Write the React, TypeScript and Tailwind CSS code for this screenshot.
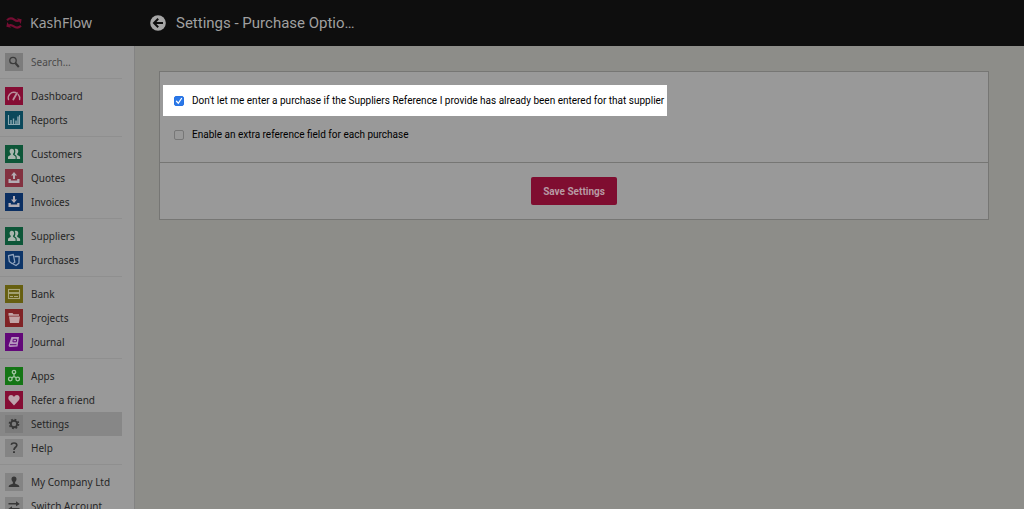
import type { ReactNode } from "react";

type Item = { label: string; tile: string; icon: ReactNode; active?: boolean };

const people = (
  <g fill="#a9b5ae">
    <path d="M6.800 3.800c1.600 0 2.300 1.100 2.300 2.500 0 1.100-.5 1.900-1 2.500v.9c.4.8 2.500 1 2.500 2.500V14H3v-1.800c0-1.500 2.300-1.700 2.700-2.500v-.9c-.5-.6-1.100-1.400-1.100-2.500 0-1.400.8-2.500 2.200-2.500z" />
    <path d="M11 3.800c1.600 0 2.300 1.100 2.300 2.500 0 1.100-.6 1.900-1.100 2.500v.9c.4.8 2.900 1 2.900 2.500V14h-3.400v-2c0-1.300-1-2-2.100-2.600.5-1 .7-1.700.7-3 0-.9-.2-1.600-.6-2.300.3-.2.8-.3 1.300-.3z" />
  </g>
);

const tray = <path d="M3.500 10v4h11v-4h-2.300v1.500H5.800V10z" fill="#b3adb4" />;

const groups: Item[][] = [
  [
    {
      label: "Dashboard",
      tile: "bg-[#850d34]",
      icon: (
        <g fill="none" stroke="#b9919d" strokeWidth="1.400" strokeLinecap="round">
          <path d="M3.500 12.500A5.600 5.600 0 0 1 10.500 5.500" />
          <path d="M13.200 7.500a5.600 5.600 0 0 1 1.400 5" />
          <path d="M8.300 12.500 12 6" strokeWidth="1.800" />
        </g>
      ),
    },
    {
      label: "Reports",
      tile: "bg-[#0b485b]",
      icon: (
        <g fill="none" stroke="#8ca8b1">
          <path d="M3.500 4v9.500h11V4" strokeWidth="1.100" />
          <path d="M6 9v4M8.500 7.500V13M11 9.500V13M13 5.500V13" strokeWidth="1.400" />
        </g>
      ),
    },
  ],
  [
    { label: "Customers", tile: "bg-[#0d5638]", icon: people },
    {
      label: "Quotes",
      tile: "bg-[#833140]",
      icon: (
        <>
          {tray}
          <path d="M9 3 12 6.500h-2V10H8V6.500H6z" fill="#b3adb4" />
        </>
      ),
    },
    {
      label: "Invoices",
      tile: "bg-[#0b2f62]",
      icon: (
        <>
          {tray}
          <path d="M9 10 6 6.500h2V3h2v3.500h2z" fill="#b3adb4" />
        </>
      ),
    },
  ],
  [
    { label: "Suppliers", tile: "bg-[#0d5638]", icon: people },
    {
      label: "Purchases",
      tile: "bg-[#0d3568]",
      icon: (
        <g fill="none" stroke="#8fa3bd" strokeWidth="1.300" strokeLinejoin="round">
          <path d="m3.500 4.700 4.800-1.200 1.500 7.700-2.500 1.500-3-2.200z" />
          <path d="M9.500 5.500h4.700l-.3 6.700-2.900 2.300-3-1.500" />
        </g>
      ),
    },
  ],
  [
    {
      label: "Bank",
      tile: "bg-[#665f10]",
      icon: (
        <g fill="none" stroke="#aaa67c">
          <rect x="3.500" y="4.500" width="11" height="9" strokeWidth="1.100" />
          <path d="M3.500 8h11" strokeWidth="1.800" />
          <path d="M5 11.500h3M9 11.500h4" strokeWidth="1" />
        </g>
      ),
    },
    {
      label: "Projects",
      tile: "bg-[#802326]",
      icon: (
        <g fill="#c1a4a5">
          <path d="M3.500 4h4l1 1.300h5.500v1.500H3.500z" />
          <path d="M4 7.500h11l-1 6.500H5z" />
        </g>
      ),
    },
    {
      label: "Journal",
      tile: "bg-[#620879]",
      icon: (
        <>
          <path d="M6.500 4H14l-1.500 9.500-7.500.5c-1.200-.2-1.500-1-1.300-2z" fill="#b598be" />
          <path d="M8.300 6.300h3.400l-.4 2.500H7.900zM5 11.700h6.500" fill="none" stroke="#620879" />
        </>
      ),
    },
  ],
  [
    {
      label: "Apps",
      tile: "bg-[#147515]",
      icon: (
        <g fill="none" stroke="#a2c4a2" strokeWidth="1.300">
          <circle cx="9" cy="5" r="1.700" />
          <circle cx="5.300" cy="12" r="1.800" />
          <circle cx="12.700" cy="12" r="1.800" />
          <path d="M9 6.700v3.600M9 9.500l-2.300 1.400M9 9.500l2.300 1.400" />
        </g>
      ),
    },
    {
      label: "Refer a friend",
      tile: "bg-[#850d34]",
      icon: (
        <path
          d="M9 14.500 4.200 9.300C2.500 7.200 3.500 4.200 6 4.100c1.400 0 2.400.8 3 1.900.6-1.100 1.600-1.900 3-1.900 2.500.1 3.500 3.100 1.800 5.200z"
          fill="#bda3ac"
        />
      ),
    },
    {
      label: "Settings",
      tile: "bg-[#7c7c7c]",
      active: true,
      icon: (
        <g fill="none" stroke="#373737">
          <circle cx="9" cy="9" r="3.200" strokeWidth="1.900" />
          <circle cx="9" cy="9" r="4.600" strokeWidth="1.500" strokeDasharray="1.810 1.800" />
        </g>
      ),
    },
    {
      label: "Help",
      tile: "bg-[#848484]",
      icon: (
        <g fill="none" stroke="#373737" strokeWidth="1.700">
          <path d="M6.200 5.800C6.500 4.500 7.600 4 9 4c1.700 0 2.800.8 2.800 2.200C11.800 8.300 9 8.200 9 10.900" />
          <path d="M9 12.300V14" strokeWidth="1.900" />
        </g>
      ),
    },
  ],
  [
    {
      label: "My Company Ltd",
      tile: "bg-[#848484]",
      icon: (
        <path
          d="M9 3.500c1.700 0 2.500 1.100 2.500 2.600 0 1.400-.7 2.400-1.400 3v1.300c.5 1 4.200.9 4.200 3.100v.5H3.700v-.5c0-2.200 3.700-2.100 4.200-3.100V9.100c-.7-.6-1.400-1.600-1.400-3C6.500 4.600 7.300 3.500 9 3.500z"
          fill="#373737"
        />
      ),
    },
    {
      label: "Switch Account",
      tile: "bg-[#848484]",
      icon: (
        <g fill="#373737">
          <path d="M3.500 6H11V4.300L14.800 7 11 9.300V7.500H3.500z" />
          <path d="M14.500 11H7V9.300L3.200 12 7 14.300v-1.800h7.500z" />
        </g>
      ),
    },
  ],
];

function Tile({ className, children }: { className: string; children: ReactNode }) {
  return (
    <span className={`block size-[18px] shrink-0 ${className}`}>
      <svg viewBox="0 0 18 18" className="size-full" aria-hidden="true">
        {children}
      </svg>
    </span>
  );
}

function NavRow({ item }: { item: Item }) {
  return (
    <li>
      <a
        href="#"
        className={`flex h-6 items-center gap-2 pl-[5px] text-[#262626] ${item.active ? "bg-[#878787]" : ""}`}
        aria-current={item.active ? "page" : undefined}
      >
        <Tile className={item.tile}>{item.icon}</Tile>
        <span className="whitespace-nowrap">{item.label}</span>
      </a>
    </li>
  );
}

function Option({ id, label, checked, highlighted }: { id: string; label: string; checked?: boolean; highlighted?: boolean }) {
  return (
    <div className={`flex w-fit items-center gap-2 pr-[3px] pl-[11px] ${highlighted ? "h-[31px] bg-white" : "h-[38px]"}`}>
      <span className="grid size-[10px] shrink-0">
        <input
          id={id}
          type="checkbox"
          defaultChecked={checked}
          className="peer col-start-1 row-start-1 size-[10px] appearance-none rounded-[2px] border border-[#777] bg-[#999] checked:border-[#2672e3] checked:bg-[#2b78e8]"
        />
        <svg viewBox="0 0 10 10" className="pointer-events-none invisible col-start-1 row-start-1 size-[10px] peer-checked:visible" aria-hidden="true">
          <path d="M2.500 5.300 4.300 7.300 7.500 2.500" fill="none" stroke="#fff" strokeWidth="1.300" strokeLinecap="round" />
        </svg>
      </span>
      <label htmlFor={id} className="text-[10px] leading-4 text-black">
        {label}
      </label>
    </div>
  );
}

export default function App() {
  return (
    <div className="flex h-screen flex-col overflow-hidden bg-[#8d8d89] font-[Roboto,'Liberation_Sans',sans-serif]">
      <header className="flex h-[46px] shrink-0 items-center bg-[#0e0e0e] text-[#a0a0a0]">
        <a href="#" className="flex w-[150px] shrink-0 items-center gap-2 pl-[6px] font-['Noto_Sans',sans-serif] text-[14px] leading-5">
          <svg viewBox="0 0 16 14" className="h-[14px] w-4" aria-hidden="true">
            <g fill="none" stroke="#750d32" strokeWidth="2.200">
              <path d="M1 4.200C3.500 1.800 6 2 8.200 3.600c2 1.500 3.700 1.800 5.300.6" />
              <path d="M15 9.800c-2.500 2.400-5 2.200-7.200.6-2-1.500-3.700-1.800-5.300-.6" />
            </g>
            <path d="M11 2.200 15.600 3.300 14.800 8zM5 11.800.4 10.700 1.200 6z" fill="#750d32" />
          </svg>
          <span>KashFlow</span>
        </a>
        <button type="button" aria-label="Back" className="size-4 shrink-0">
          <svg viewBox="0 0 16 16" className="size-4" aria-hidden="true">
            <circle cx="8" cy="8" r="7.800" fill="#a6a6a6" />
            <path d="M13 8H4M8.200 3.700 4 8l4.200 4.300" fill="none" stroke="#0e0e0e" strokeWidth="2" />
          </svg>
        </button>
        <h1 className="pl-[10px] text-[15px] leading-5">Settings - Purchase Optio…</h1>
      </header>

      <div className="flex min-h-0 grow">
        <nav className="w-[135px] shrink-0 overflow-hidden border-r border-[#838383] bg-[#999] pt-1 pr-3 font-['Noto_Sans',sans-serif] text-[10px]">
          <div className="flex h-6 items-center gap-2 pl-[5px]">
            <Tile className="bg-[#7c7c7c]">
              <g fill="none" stroke="#3b3b3b">
                <circle cx="8" cy="7.500" r="3.200" strokeWidth="1.300" />
                <path d="m10.300 10 3.500 4" strokeWidth="2" />
              </g>
            </Tile>
            <input
              type="search"
              aria-label="Search"
              placeholder="Search…"
              className="w-full min-w-0 bg-transparent outline-none placeholder:text-[#4a4a4a]"
            />
          </div>
          {groups.map((group) => (
            <ul key={group[0].label} className="mt-1 border-t border-[#8f8f8f] pt-[5px]">
              {group.map((item) => (
                <NavRow key={item.label} item={item} />
              ))}
            </ul>
          ))}
        </nav>

        <main className="grow pt-[25px] pr-[35px] pl-6">
          <form className="border border-[#767674] bg-[#999]" onSubmit={(e) => e.preventDefault()}>
            <div className="pt-[13px] pb-2 pl-[3px]">
              <Option
                id="unique-reference"
                checked
                highlighted
                label="Don't let me enter a purchase if the Suppliers Reference I provide has already been entered for that supplier"
              />
              <Option id="extra-reference" label="Enable an extra reference field for each purchase" />
            </div>
            <div className="flex justify-center border-t border-[#767674] py-[14px]">
              <button type="submit" className="h-7 rounded-[2px] bg-[#7f0d30] px-3 text-[10px] font-bold text-[#b799a3]">
                Save Settings
              </button>
            </div>
          </form>
        </main>
      </div>
    </div>
  );
}
